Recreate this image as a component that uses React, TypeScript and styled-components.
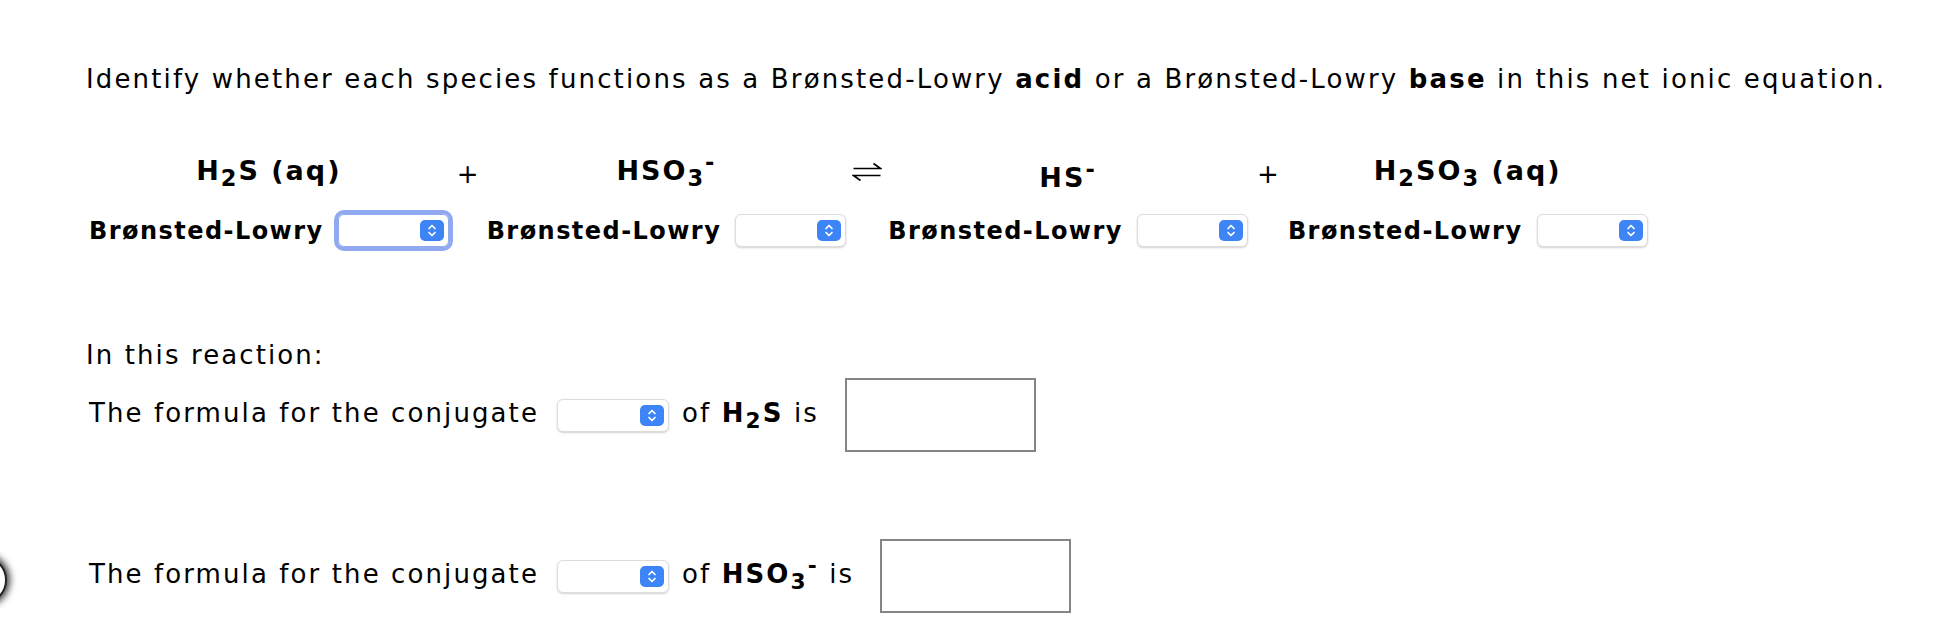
import React from 'react';
import styled, { createGlobalStyle, css } from 'styled-components';

const GlobalStyle = createGlobalStyle`
  body {
    margin: 0;
    background: #fff;
    color: #000;
    font-family: "DejaVu Sans", Verdana, sans-serif;
  }
`;

const Page = styled.div`
  position: relative;
  width: 1936px;
  height: 634px;
  overflow: hidden;
  padding: 64px 0 0 86px;
  box-sizing: border-box;
`;

const Prompt = styled.p`
  margin: 0;
  font-size: 26px;
  line-height: 30px;
  letter-spacing: 2.15px;
  white-space: nowrap;
`;

const Equation = styled.div`
  display: grid;
  grid-template-columns: auto 38px auto 42px auto 40px auto;
  grid-template-rows: auto auto;
  justify-content: start;
  row-gap: 20px;
  margin: 52px 0 0 3px;
  align-items: end;
`;

const Species = styled.div`
  justify-self: center;
  font-size: 27px;
  font-weight: bold;
  line-height: 32px;
  letter-spacing: 2px;
  white-space: nowrap;
`;

const Operator = styled.div<{ $shift: number }>`
  align-self: center;
  justify-self: center;
  font-size: 26px;
  line-height: 30px;
  margin-top: ${(p) => p.$shift}px;
  display: flex;
  align-items: center;
`;

const Cell = styled.div`
  display: flex;
  align-items: center;
  gap: 14px;
`;

const Label = styled.span`
  font-size: 24px;
  font-weight: bold;
  letter-spacing: 1.45px;
  white-space: nowrap;
`;

const SelectBox = styled.div<{ $focused?: boolean; $width?: number }>`
  position: relative;
  width: ${(p) => p.$width ?? 111}px;
  height: 33px;
  box-sizing: border-box;
  background: #fff;
  border: 1px solid #dcdcdc;
  border-radius: 6px;
  box-shadow: 0 1px 2px rgba(0, 0, 0, 0.18);
  display: flex;
  align-items: center;
  justify-content: flex-end;
  padding-right: 4px;
  flex-shrink: 0;
  ${(p) =>
    p.$focused &&
    css`
      outline: 4px solid #90a9f1;
      outline-offset: 0px;
      border-color: #90a9f1;
    `}
`;

const Stepper = styled.span`
  width: 24px;
  height: 21px;
  border-radius: 5px;
  background: #3d85f6;
  display: flex;
  align-items: center;
  justify-content: center;
`;

const Chevrons = () => (
  <svg width="10" height="15" viewBox="0 0 10 15" fill="none">
    <path d="M2 5.5 L5 2.5 L8 5.5" stroke="#fff" strokeWidth="1.7" strokeLinecap="round" strokeLinejoin="round" />
    <path d="M2 9.5 L5 12.5 L8 9.5" stroke="#fff" strokeWidth="1.7" strokeLinecap="round" strokeLinejoin="round" />
  </svg>
);

const Equilibrium = () => (
  <svg width="30" height="22" viewBox="0 0 30 22" fill="none">
    <path d="M1.5 7.5 H28.5 L21.5 2.5" stroke="#000" strokeWidth="1.6" strokeLinejoin="miter" />
    <path d="M28.5 14.5 H1.5 L8.5 19.5" stroke="#000" strokeWidth="1.6" strokeLinejoin="miter" />
  </svg>
);

const Select = ({ focused, width }: { focused?: boolean; width?: number }) => (
  <SelectBox $focused={focused} $width={width}>
    <Stepper>
      <Chevrons />
    </Stepper>
  </SelectBox>
);

const Conjugates = styled.div`
  margin-top: 93px;
`;

const Lead = styled.p`
  margin: 0;
  font-size: 26px;
  line-height: 30px;
  letter-spacing: 2.1px;
`;

const FormulaRow = styled.div<{ $top: number }>`
  display: flex;
  align-items: center;
  margin: ${(p) => p.$top}px 0 0 3px;
  font-size: 26px;
  line-height: 30px;
  letter-spacing: 2.1px;
  white-space: nowrap;

  sub,
  sup {
    line-height: 0;
  }
`;

const Phrase = styled.span`
  margin: 0 18px 4px 0;
`;

const Tail = styled.span`
  margin: 0 26px 4px 13px;
`;

const AnswerBox = styled.div`
  width: 191px;
  height: 74px;
  box-sizing: border-box;
  border: 2px solid #858585;
  background: #fff;
`;

const EdgeButton = styled.div`
  position: absolute;
  left: -41px;
  top: 556px;
  width: 44px;
  height: 44px;
  border-radius: 50%;
  background: #fff;
  border: 2px solid #222;
  box-shadow: 0 0 7px 3px rgba(0, 0, 0, 0.75);
`;

const labels = ['Brønsted-Lowry', 'Brønsted-Lowry', 'Brønsted-Lowry', 'Brønsted-Lowry'];

export default function App() {
  return (
    <>
      <GlobalStyle />
      <Page>
        <Prompt>
          Identify whether each species functions as a Brønsted-Lowry <b>acid</b> or a Brønsted-Lowry{' '}
          <b>base</b> in this net ionic equation.
        </Prompt>

        <Equation>
          <Species>
            H<sub>2</sub>S (aq)
          </Species>
          <Operator $shift={8}>+</Operator>
          <Species>
            HSO<sub>3</sub>
            <sup>-</sup>
          </Species>
          <Operator $shift={4}>
            <Equilibrium />
          </Operator>
          <Species>
            HS<sup>-</sup>
          </Species>
          <Operator $shift={8}>+</Operator>
          <Species>
            H<sub>2</sub>SO<sub>3</sub> (aq)
          </Species>

          {labels.map((label, i) => (
            <React.Fragment key={i}>
              <Cell>
                <Label>{label}</Label>
                <Select focused={i === 0} />
              </Cell>
              {i < 3 && <span />}
            </React.Fragment>
          ))}
        </Equation>

        <Conjugates>
          <Lead>In this reaction:</Lead>
          <FormulaRow $top={8}>
            <Phrase>The formula for the conjugate</Phrase>
            <Select width={112} />
            <Tail>
              of <b>H<sub>2</sub>S</b> is
            </Tail>
            <AnswerBox />
          </FormulaRow>
          <FormulaRow $top={87}>
            <Phrase>The formula for the conjugate</Phrase>
            <Select width={112} />
            <Tail>
              of <b>HSO<sub>3</sub><sup>-</sup></b> is
            </Tail>
            <AnswerBox />
          </FormulaRow>
        </Conjugates>

        <EdgeButton />
      </Page>
    </>
  );
}
